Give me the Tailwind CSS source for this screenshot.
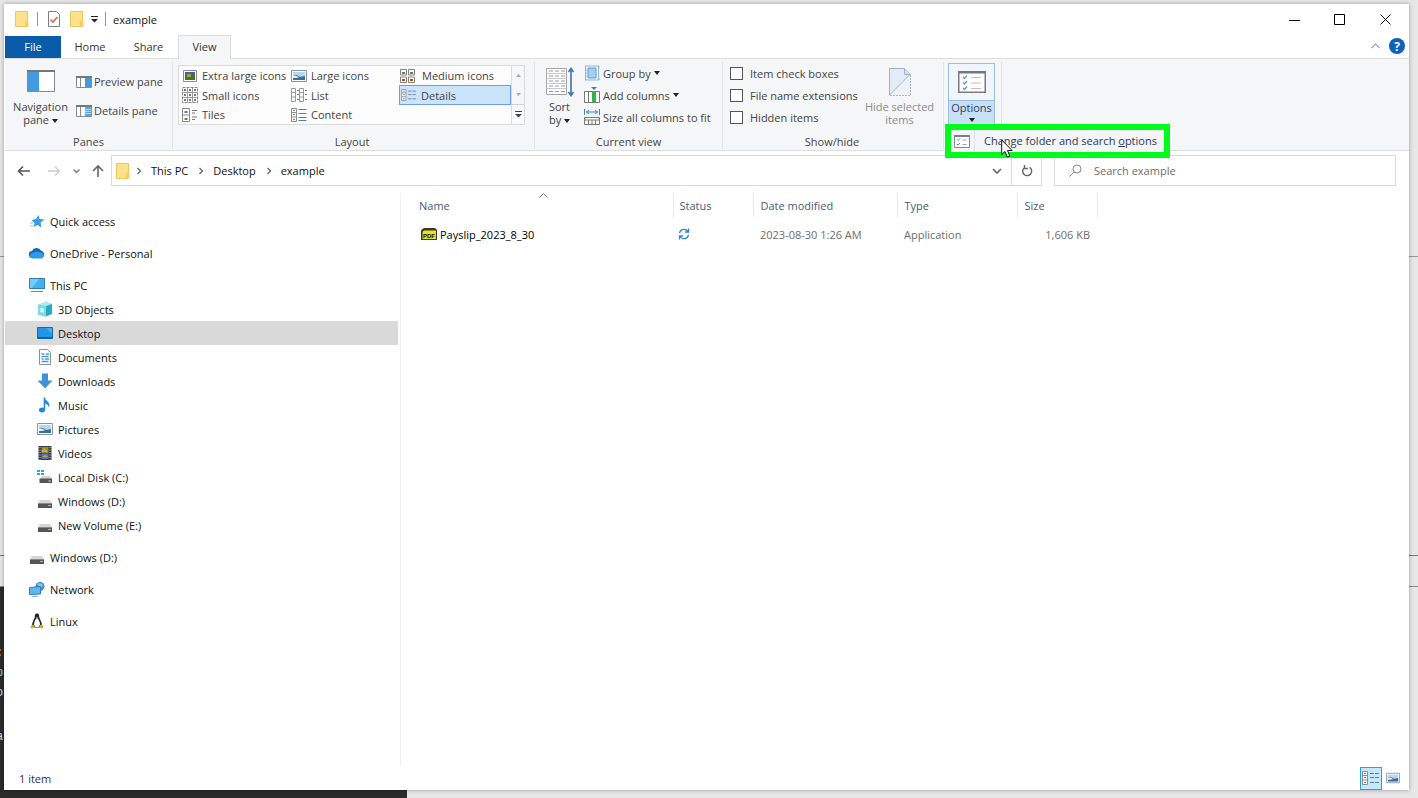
<!DOCTYPE html>
<html lang="en">
<head>
<meta charset="utf-8">
<title>example</title>
<script src="https://cdn.jsdelivr.net/npm/@tailwindcss/browser@4"></script>
</head>
<body class="font-['Open_Sans','Noto_Sans',sans-serif] text-[11px] leading-[13px] text-[#111]">
<svg class="hidden" aria-hidden="true">
  <symbol id="folder" viewBox="0 0 14 16"><path d="M.5.5h12v15H.5z" fill="#fde18b" stroke="#ecc75c"/><path d="M10 9.500h3.500v6H10z" fill="#f5cf62"/></symbol>
  <symbol id="caret" viewBox="0 0 6 4"><path d="M0 0h6L3 4z" fill="#222"/></symbol>
  <symbol id="chev" viewBox="0 0 6 8"><path d="M1.500 1 4.500 4l-3 3" fill="none" stroke="#666" stroke-width="1.300"/></symbol>
  <symbol id="picture" viewBox="0 0 16 14"><path d="M.5 1.500h15v11H.5z" fill="#fff" stroke="#8795a3"/><path d="M2 3h12v8H2z" fill="#b5d8f2"/><path d="M2 7l4-1 3 2 5-1v4H2z" fill="#3d6f94"/><path d="M2 7l4 0 2 1.500-6 .5z" fill="#fff"/></symbol>
  <symbol id="details" viewBox="0 0 18 14"><path d="M.5.5h5v13h-5zM.5 4.500h5M.5 9h5" fill="#fff" stroke="#8c8c8c"/><path d="M2 2.500h2M2 6.500h2M2 11.500h2" stroke="#a4673f"/><path d="M8 2.500h4M13 2.500h4M8 6.500h4M13 6.500h4M8 11.500h4M13 11.500h4" stroke="#5b7fa8"/></symbol>
  <symbol id="drive" viewBox="0 0 16 16"><path d="M3 7h10l2 4H1z" fill="#d5d5d5"/><path d="M1 10.500h14V15H1z" fill="#555"/><path d="M1 10.500h14" stroke="#8a8a8a"/><path d="M11.500 12.500h2" stroke="#d8f5d8"/></symbol>
  <symbol id="checklist" viewBox="0 0 28 22"><path d="M.75.75h26.500v20.500H.75z" fill="#fff" stroke="#7b7b7b" stroke-width="1.500"/><path d="M1 1.500h26" stroke="#777" stroke-width="2"/><path d="M5 6l1.500 1.500L9 4.500M5 11.500 6.500 13 9 10M5 17l1.500 1.500L9 15.500" fill="none" stroke="#5f97d0" stroke-width="1.300"/><path d="M13 6.500h10M13 12h10M13 17.500h10" stroke="#d8b7a4"/></symbol>
  <symbol id="checklist-small" viewBox="0 0 16 13"><path d="M.5.5h15v12H.5z" fill="#fff" stroke="#808890"/><path d="M0 1h16" stroke="#7a7f88" stroke-width="2"/><path d="M3 4.500l1 1 2-2M3 9l1 1 2-2" fill="none" stroke="#6a6fd0"/><path d="M8.500 5h4M8.500 9.500h4" stroke="#a79ac0"/></symbol>
</svg>

<div class="relative h-screen overflow-hidden bg-[#e7e7e7] pt-1 pr-[9px] pb-2 pl-1">
  <div class="absolute inset-x-0 top-64 h-px bg-[#999]"></div>
  <div class="absolute inset-x-0 top-[555px] h-px bg-[#777]"></div>
  <div class="absolute inset-x-0 top-[586px] h-px bg-[#888]"></div>
  <div class="absolute top-[587px] bottom-0 left-0 w-[407px] overflow-hidden bg-[#2b2b2b] font-['Liberation_Mono',monospace] text-[12px] text-[#ddd]" aria-hidden="true">
    <div class="absolute top-[60px] -left-1">:</div><div class="absolute top-[80px] -left-1 text-[#7fe0b0]">p</div><div class="absolute top-[100px] -left-1">o</div><div class="absolute top-[144px] -left-1">a</div>
  </div>

  <main class="relative flex h-full flex-col bg-white pl-px shadow-[0_0_4px_rgba(0,0,0,0.35)]">
    <header class="flex h-8 shrink-0 items-center pb-0.5 pl-2.5">
      <svg class="h-4 w-3.5"><use href="#folder"/></svg>
      <span class="mr-2.5 ml-2 h-3.5 w-px bg-[#999]"></span>
      <button aria-label="Properties"><svg class="h-4 w-3" viewBox="0 0 12 16"><path d="M.5.5h8l3 3v12H.5z" fill="#fff" stroke="#7d7d7d"/><path d="M2.500 8.500 5 11l4.500-5" fill="none" stroke="#d9694b" stroke-width="1.700"/></svg></button>
      <button class="ml-2.5" aria-label="New folder"><svg class="h-4 w-3.5"><use href="#folder"/></svg></button>
      <button class="ml-[7px]" aria-label="Customize toolbar"><svg class="h-2 w-[7px]" viewBox="0 0 7 8"><path d="M0 1.500h7" stroke="#222"/><path d="M0 4h7L3.500 7.500z" fill="#222"/></svg></button>
      <span class="mx-[7px] h-3.5 w-px bg-[#999]"></span>
      <h1>example</h1>
      <div class="ml-auto flex h-full">
        <button class="flex w-[46px] items-center justify-center" aria-label="Minimize"><svg class="size-[11px]" viewBox="0 0 11 11"><path d="M0 6.500h11" stroke="#000"/></svg></button>
        <button class="flex w-[45px] items-center justify-center" aria-label="Maximize"><svg class="size-[11px]" viewBox="0 0 11 11"><path d="M.5.5h10v10H.5z" fill="none" stroke="#000"/></svg></button>
        <button class="flex w-[47px] items-center justify-center" aria-label="Close"><svg class="size-[11px]" viewBox="0 0 11 11"><path d="M.5.5l10 10M10.500.5l-10 10" stroke="#000"/></svg></button>
      </div>
    </header>

    <nav class="flex h-[23px] shrink-0 items-stretch border-b border-[#dcdcdc] text-[#333]" aria-label="Ribbon tabs">
      <button class="w-14 bg-[#0a5ca8] pb-0.5 text-white">File</button>
      <button class="w-[58px] pb-0.5">Home</button>
      <button class="w-[59px] pb-0.5">Share</button>
      <button class="-mt-px -mb-px w-[53px] border border-b-0 border-[#dcdcdc] bg-[#f5f6f7] pb-0.5">View</button>
      <div class="ml-auto flex items-center gap-2 pr-1 pb-0.5">
        <button aria-label="Collapse ribbon"><svg class="h-2 w-[11px]" viewBox="0 0 11 8"><path d="M1.500 6 5.500 2l4 4" fill="none" stroke="#a5a9b0" stroke-width="1.300"/></svg></button>
        <button class="size-4 rounded-full bg-[#0c62b8] text-[12px] font-bold text-white" aria-label="Help">?</button>
      </div>
    </nav>

    <section class="flex h-[92px] shrink-0 border-b border-[#dedede] bg-[#f5f6f7] pt-[3px] pb-px text-[#444]" aria-label="View ribbon">
      <div class="flex w-[168px] flex-col border-r border-[#e2e3e4]">
        <div class="flex h-[70px]">
          <button class="flex w-[71px] flex-col items-center pt-2"><svg class="h-[22px] w-7" viewBox="0 0 28 22"><path d="M.5.5h27v21H.5z" fill="#fff" stroke="#8a8a8a"/><path d="M1 1h11v20H1z" fill="#439bdd"/><path d="M0 1h28" stroke="#777" stroke-width="2"/></svg>
            <span class="mt-2">Navigation<br>pane <svg class="inline h-1 w-1.5 align-middle"><use href="#caret"/></svg></span></button>
          <div class="flex flex-col items-start gap-3 pt-[11px]">
            <button class="flex h-[17px] items-center gap-0.5"><svg class="h-3 w-4" viewBox="0 0 16 12"><path d="M.5.5h15v11H.5zM4.500 1v10" fill="#fff" stroke="#8a8a8a"/><path d="M9 1h6.500v10H9z" fill="#439bdd"/><path d="M0 1h16" stroke="#777" stroke-width="2"/></svg>Preview pane</button>
            <button class="flex h-[17px] items-center gap-0.5"><svg class="h-3 w-4" viewBox="0 0 16 12"><path d="M.5.5h15v11H.5zM4.500 1v10" fill="#fff" stroke="#8a8a8a"/><path d="M9 1h6.500v10H9z" fill="#58a8e4"/><path d="M9 4.500h6M9 6.500h6M9 8.500h6" stroke="#b7dcf5"/><path d="M0 1h16" stroke="#777" stroke-width="2"/></svg>Details pane</button>
          </div>
        </div>
        <h2 class="mt-[3px] text-center">Panes</h2>
      </div>

      <div class="flex w-[362px] flex-col border-r border-[#e2e3e4] pr-2 pl-[5px]">
        <div class="h-[70px] pt-[3px]">
          <div class="flex h-[60px] w-[347px] border border-[#dadbdc] bg-[#fcfcfd]">
            <div class="grid h-[58px] w-[332px] shrink-0 grid-cols-[112px_109px_111px] grid-rows-[19px_20px_19px] whitespace-nowrap">
              <button class="flex items-center gap-1 pl-[3px]"><svg class="h-3.5 w-4" viewBox="0 0 16 14"><path d="M1.500 1.500h13v11h-13z" fill="#fff" stroke="#888ba8"/><path d="M3 3h10v8H3z" fill="#4b58a6"/><path d="M3 8l3-3 3 2 4-2v6H3z" fill="#48731f"/><path d="M5 5h4v3H5z" fill="#9fa83a"/></svg>Extra large icons</button>
              <button class="flex items-center gap-1"><svg class="h-3.5 w-4"><use href="#picture"/></svg>Large icons</button>
              <button class="flex items-center gap-1.5"><svg class="h-3.5 w-4" viewBox="0 0 16 14"><path d="M.5.5h6v5.500h-6zM8.500.5h6v5.500h-6zM.5 8h6v5.500h-6zM8.500 8h6v5.500h-6z" fill="#fff" stroke="#8a8078"/><path d="M2 4h3M10 4h3" stroke="#3b8f6c" stroke-width="2"/><path d="M2 11h3M10 11h3" stroke="#b05333" stroke-width="2"/></svg>Medium icons</button>
              <button class="flex items-center gap-1 pl-[3px]"><svg class="size-4" viewBox="0 0 16 16"><path d="M.5.5h15v15H.5z" fill="#fff" stroke="#888" stroke-dasharray="3 1"/><path d="M.5 5.500h15M.5 10.500h15M5.500.5v15M10.500.5v15" stroke="#999"/><path d="M2 3h2M7 3h2M12 3h2M2 8h2M7 8h2M12 8h2M2 13h2M7 13h2M12 13h2" stroke="#777" stroke-width="2"/></svg>Small icons</button>
              <button class="flex items-center gap-1"><svg class="h-3.5 w-4" viewBox="0 0 16 14"><path d="M.5.5h4v13h-4zM8.500.5h4v13h-4zM.5 4.500h4M.5 9h4M8.500 4.500h4M8.500 9h4" fill="#fff" stroke="#999"/><path d="M6 2.500h2M6 6.500h2M6 11.500h2M14 2.500h2M14 6.500h2M14 11.500h2" stroke="#777"/></svg>List</button>
              <button class="-ml-px flex items-center gap-1 border border-[#6aa0e0] bg-[#cce4fb] pl-px"><svg class="h-3 w-4"><use href="#details"/></svg>Details</button>
              <button class="flex items-center gap-1 pl-[3px]"><svg class="h-3.5 w-4" viewBox="0 0 16 14"><path d="M.5.5h7v13h-7zM.5 7h7" fill="#fff" stroke="#8a8a8a"/><path d="M2.500 4h3" stroke="#4a7fb0" stroke-width="2"/><path d="M2.500 11h3" stroke="#4d9254" stroke-width="2"/><path d="M10 2.500h5M10 5h3M10 9h5M10 11.500h3" stroke="#777"/></svg>Tiles</button>
              <button class="flex items-center gap-1"><svg class="h-3.5 w-4" viewBox="0 0 16 14"><path d="M.5.5h5v13h-5zM.5 4.500h5M.5 9h5" fill="#fff" stroke="#8c8c8c"/><path d="M2 2.500h2M2 6.500h2M2 11.500h2" stroke="#5a9b6b"/><path d="M7.500 1.500h8M7.500 5.500h8M7.500 9.500h8M7.500 12.500h8" stroke="#4c7fc4"/></svg>Content</button>
            </div>
            <div class="flex flex-1 flex-col border-l border-[#dadbdc] bg-[#f5f6f7]">
              <button class="flex flex-1 items-center justify-center" aria-label="Scroll up"><svg class="h-[3px] w-[5px]" viewBox="0 0 5 3"><path d="M0 3h5L2.500 0z" fill="#aaa"/></svg></button>
              <button class="flex flex-1 items-center justify-center" aria-label="Scroll down"><svg class="h-[3px] w-[5px]" viewBox="0 0 5 3"><path d="M0 0h5L2.500 3z" fill="#aaa"/></svg></button>
              <button class="flex flex-1 items-center justify-center border-t border-[#c5d5e8] bg-[#f8fafd]" aria-label="More layouts"><svg class="h-[7px] w-[7px]" viewBox="0 0 7 7"><path d="M0 .5h7" stroke="#444"/><path d="M0 3h7L3.500 6.500z" fill="#444"/></svg></button>
            </div>
          </div>
        </div>
        <h2 class="mt-[3px] text-center">Layout</h2>
      </div>

      <div class="flex w-[188px] flex-col border-r border-[#e2e3e4]">
        <div class="flex h-[70px]">
          <button class="flex w-[49px] flex-col items-center pt-[5px]"><svg class="h-[30px] w-7" viewBox="0 0 28 30"><path d="M.5 1.500h20v26H.5z" fill="#fff" stroke="#a5a5a5"/><path d="M.5 6.500h20M.5 11.500h20M.5 16.500h20M.5 21.500h20" stroke="#c2c8ce"/><path d="M3 4h4M9 4h4M15 4h4M3 9h4M9 9h4M15 9h4M3 14h4M9 14h4M15 14h4M3 19h4M9 19h4M15 19h4M3 24.500h4M9 24.500h4M15 24.500h4" stroke="#999"/><path d="M25 3v24M22.500 5 25 1.500 27.500 5M22.500 25l2.500 3.500 2.500-3.500" fill="none" stroke="#4778b5" stroke-width="1.700"/></svg>
            <span class="mt-[3px]">Sort<br>by <svg class="inline h-1 w-1.5 align-middle"><use href="#caret"/></svg></span></button>
          <div class="flex flex-col whitespace-nowrap">
            <button class="flex h-[22px] items-center gap-[3px]"><svg class="size-4" viewBox="0 0 16 16"><path d="M1 1h14v2M1 5h2M1 8h2M1 11h2M1 15h14v-2" fill="none" stroke="#8db8df"/><path d="M1.500 1v14M14.500 1v14" stroke="#8db8df"/><path d="M4 3h8v10H4z" fill="#a6d0f2" stroke="#5c9dd0"/></svg>Group by <svg class="h-1 w-1.5"><use href="#caret"/></svg></button>
            <button class="flex h-[22px] items-center gap-[3px]"><svg class="size-4" viewBox="0 0 16 16"><path d="M.5 4.500h15v11H.5zM4.500 4.500v11" fill="#fff" stroke="#777"/><path d="M8 4h4v11.500H8z" fill="#35b14a"/><path d="M7 0h6l-3 3z" fill="#4778b5"/></svg>Add columns <svg class="h-1 w-1.5"><use href="#caret"/></svg></button>
            <button class="flex h-[22px] items-center gap-[3px]"><svg class="size-4" viewBox="0 0 16 16"><path d="M.5 0v6M15.500 0v6M2 3h12M5 1 2.500 3 5 5M11 1l2.500 2L11 5" fill="none" stroke="#3f7fc4"/><path d="M.5 8.500h15v7H.5zM.5 11h15M4.500 11v4.500M8 11v4.500M11.500 11v4.500" fill="#fff" stroke="#777"/></svg>Size all columns to fit</button>
          </div>
        </div>
        <h2 class="mt-[3px] text-center">Current view</h2>
      </div>

      <div class="flex w-[221px] flex-col border-r border-[#e2e3e4]">
        <div class="flex h-[70px] pl-[7px]">
          <div class="flex w-[134px] shrink-0 flex-col whitespace-nowrap">
            <label class="flex h-[22px] items-center gap-[7px]"><input type="checkbox" class="size-[13px] appearance-none border border-[#555] bg-white">Item check boxes</label>
            <label class="flex h-[22px] items-center gap-[7px]"><input type="checkbox" class="size-[13px] appearance-none border border-[#555] bg-white">File name extensions</label>
            <label class="flex h-[22px] items-center gap-[7px]"><input type="checkbox" class="size-[13px] appearance-none border border-[#555] bg-white">Hidden items</label>
          </div>
          <button class="flex w-[71px] flex-col items-center pt-[5px] whitespace-nowrap text-[#8b8b8b]"><svg class="h-[30px] w-[22px]" viewBox="0 0 22 30"><path d="M.5 1.500h15l6 6v21H.5z" fill="#edf2f9" stroke="#a9b6c6" stroke-dasharray="2 1"/><path d="M.5 28 21 7.500l-5.500-6H.5z" fill="#e2ebf6" stroke="#a4b4c8"/><path d="M15.500 1.500v6h6" fill="#cfe0f2" stroke="#a4b4c8"/></svg>
            <span class="mt-[3px]">Hide selected<br>items</span></button>
        </div>
        <h2 class="mt-[3px] pr-0.5 text-center">Show/hide</h2>
      </div>

      <div class="relative w-[58px] border-r border-[#e2e3e4] pl-1">
        <button class="mt-px flex h-[62px] w-[47px] flex-col items-center border border-[#9cbfe6] bg-[#f1f6fc] text-[#2d3f5c]" aria-haspopup="menu" aria-expanded="true"><svg class="mt-[7px] h-[22px] w-7 shrink-0"><use href="#checklist"/></svg>
          <span class="mt-[7px] flex w-full flex-1 flex-col items-center gap-1 border-t border-[#9cbfe6] bg-[#c7dff7]">Options <svg class="h-1 w-1.5 shrink-0"><use href="#caret"/></svg></span></button>
        <div class="absolute top-[62px] left-px z-10 flex h-[34px] w-[225px] items-center border-[6px] border-[#00fb1c] bg-[#f3f5f9]" role="menu">
          <button class="flex h-full w-full items-center whitespace-nowrap text-[#2d3a50]" role="menuitem"><span class="flex h-full w-6 items-center border-r border-[#dcdfe4] pl-[3px]"><svg class="h-[13px] w-4"><use href="#checklist-small"/></svg></span><span class="pb-0.5 pl-[9px]">Change folder and search <u>o</u>ptions</span></button>
          <svg class="absolute top-[9px] left-[50px] h-[19px] w-3" viewBox="0 0 12 19"><path d="M.7 1v14.500l3.300-3 2.300 5.500 2.500-1-2.300-5.500h4.600z" fill="#fff" stroke="#111"/></svg>
        </div>
      </div>
    </section>

    <div class="flex h-9 shrink-0 items-end pr-[13px] pb-px">
      <div class="flex h-[31px] items-center pl-3">
        <button aria-label="Back"><svg class="h-3 w-3.5" viewBox="0 0 14 12"><path d="M13 6H2M6 1.500 1.500 6 6 10.500" fill="none" stroke="#555" stroke-width="1.600"/></svg></button>
        <button class="ml-4" aria-label="Forward"><svg class="h-3 w-3.5" viewBox="0 0 14 12"><path d="M1 6h11M8 1.500 12.500 6 8 10.500" fill="none" stroke="#ccc" stroke-width="1.300"/></svg></button>
        <button class="ml-3" aria-label="Recent locations"><svg class="h-1.5 w-[7px]" viewBox="0 0 7 6"><path d="M.5 1.500l3 3 3-3" fill="none" stroke="#777" stroke-width="1.300"/></svg></button>
        <button class="ml-3" aria-label="Up"><svg class="h-3.5 w-3" viewBox="0 0 12 14"><path d="M6 13V2M1 7l5-5 5 5" fill="none" stroke="#666" stroke-width="1.600"/></svg></button>
      </div>
      <nav class="ml-[7px] flex h-[31px] flex-1 items-center border border-[#d9d9d9] pl-1" aria-label="Address">
        <svg class="h-4 w-3.5"><use href="#folder"/></svg>
        <svg class="ml-1.5 h-2 w-1.5"><use href="#chev"/></svg>
        <a href="#" class="ml-[9px]">This PC</a>
        <svg class="ml-2.5 h-2 w-1.5"><use href="#chev"/></svg>
        <a href="#" class="ml-[9px]">Desktop</a>
        <svg class="ml-2.5 h-2 w-1.5"><use href="#chev"/></svg>
        <a href="#" class="ml-[9px]">example</a>
        <div class="ml-auto flex h-full">
          <button class="flex w-[29px] items-center justify-center" aria-label="Previous locations"><svg class="h-2 w-2.5" viewBox="0 0 10 8"><path d="M1 2l4 4 4-4" fill="none" stroke="#666" stroke-width="1.600"/></svg></button>
          <button class="flex w-[30px] items-center justify-center border-l border-[#d9d9d9]" aria-label="Refresh"><svg class="size-3" viewBox="0 0 12 12"><path d="M3.500 2.500A4.500 4.500 0 1 0 8.500 2.300M3.500 0v3.500H7" fill="none" stroke="#666" stroke-width="1.400"/></svg></button>
        </div>
      </nav>
      <label class="ml-3 flex h-[31px] w-[342px] items-center border border-[#d9d9d9] pl-3.5"><svg class="size-[13px]" viewBox="0 0 13 13"><circle cx="8" cy="5" r="4" fill="none" stroke="#888"/><path d="M5 8 .5 12.500" stroke="#888"/></svg><input type="search" placeholder="Search example" aria-label="Search example" class="ml-3 min-w-0 flex-1 outline-none placeholder:text-[#6d6d6d]"></label>
    </div>

    <div class="flex min-h-0 flex-1 pt-1.5">
      <nav class="flex w-[396px] shrink-0 flex-col border-r border-[#f1f1f1] pt-4" aria-label="Folders">
        <a href="#" class="flex h-6 items-center gap-[5px] pl-6"><svg class="size-4" viewBox="0 0 16 16"><path d="M9.500 2l1 4 5 .5-4 3 1 5-4-2.500-4 2 1-4-3-3 4.500-1z" fill="#3b9be6"/><path d="M1 10h3M1 13h3" stroke="#8bc5ee"/></svg>Quick access</a>
        <a href="#" class="mt-2 flex h-6 items-center gap-[5px] pl-6"><svg class="size-4" viewBox="0 0 16 16"><path d="M3.500 13a3.500 3.500 0 0 1-.5-7 5 5 0 0 1 9-.5 4 4 0 0 1 1 7.500z" fill="#1267b8"/><path d="M3 13.500a3 3 0 0 1-1-5l5-2 5 1a3.200 3.200 0 0 1 1 6z" fill="#2e9be8"/></svg>OneDrive - Personal</a>
        <a href="#" class="mt-2 flex h-6 items-center gap-[5px] pl-6"><svg class="size-4" viewBox="0 0 16 16"><path d="M.5 1.500h15v10H.5z" fill="#44b0f0" stroke="#2d7fb4"/><path d="M1 2h9L3 11H1z" fill="#7accf7"/><path d="M2 14.500h12" stroke="#7b8792"/></svg>This PC</a>
        <a href="#" class="flex h-6 items-center gap-[5px] pl-8"><svg class="size-4" viewBox="0 0 16 16"><path d="M1 4l8-3 6 2v10l-6 2.500-8-2z" fill="#29a9c4"/><path d="M1 4l8 1v10.500l-8-2z" fill="#7fdbe2"/><path d="M1 4l8-3 6 2-6 2z" fill="#b0eff0"/><path d="M3.500 7l3 .5v4l-3-.5z" fill="#e7fbfa"/></svg>3D Objects</a>
        <a href="#" aria-current="page" class="mr-0.5 flex h-6 items-center gap-[5px] bg-[#d9d9d9] pl-8"><svg class="size-4" viewBox="0 0 16 16"><path d="M.5 2.500h15v11H.5z" fill="#1f96ea" stroke="#126bb0"/><path d="M9 3h6v6z" fill="#41aff5"/><path d="M1 12.500h14" stroke="#0c5a99"/></svg>Desktop</a>
        <a href="#" class="flex h-6 items-center gap-[5px] pl-8"><svg class="size-4" viewBox="0 0 16 16"><path d="M2.500.5h8l3 3v12h-11z" fill="#fff" stroke="#8092a3"/><path d="M4.500 5h3M9 5h3M4.500 7.500h7M4.500 10h2M8 10h4M4.500 12.500h7" stroke="#4b9bd0" stroke-width="1.300"/></svg>Documents</a>
        <a href="#" class="flex h-6 items-center gap-[5px] pl-8"><svg class="size-4" viewBox="0 0 16 16"><path d="M5 .5h6v7h4.500L8 15.500.5 7.500H5z" fill="#3e93d8"/></svg>Downloads</a>
        <a href="#" class="flex h-6 items-center gap-[5px] pl-8"><svg class="size-4" viewBox="0 0 16 16"><path d="M7.500.5v12" stroke="#1c88d6" stroke-width="1.600"/><ellipse cx="5" cy="13" rx="3" ry="2.500" fill="#1c88d6"/><path d="M7 .5c1 3 7 4 5 10-.5-2.500-3-4-5-4.500z" fill="#1c88d6"/></svg>Music</a>
        <a href="#" class="flex h-6 items-center gap-[5px] pl-8"><svg class="h-3.5 w-4"><use href="#picture"/></svg>Pictures</a>
        <a href="#" class="flex h-6 items-center gap-[5px] pl-8"><svg class="size-4" viewBox="0 0 16 16"><path d="M1.500 1h13v14h-13z" fill="#3b3b45"/><path d="M3 2v13M13 2v13" stroke="#d5d5dd" stroke-dasharray="1 1.500"/><path d="M4.500 2h7v5.500h-7z" fill="#7a9b2e"/><path d="M4.500 8.500h7V14h-7z" fill="#4c78c8"/><path d="M4.500 6l3-3 4 4.500h-7zM5 12l3-2 3.500 2z" fill="#d8a53d"/></svg>Videos</a>
        <a href="#" class="flex h-6 items-center gap-[5px] pl-8"><svg class="size-4" viewBox="0 0 16 16"><path d="M0 1h3v2H0zM4 1h3v2H4zM0 4h3v2H0zM4 4h3v2H4z" fill="#29abe2"/><path d="M5 7h8l2 3H3z" fill="#d5d5d5"/><path d="M2.500 9.500H15V14H2.500z" fill="#555"/><path d="M11.500 12h2" stroke="#d8f5d8"/></svg>Local Disk (C:)</a>
        <a href="#" class="flex h-6 items-center gap-[5px] pl-8"><svg class="size-4"><use href="#drive"/></svg>Windows (D:)</a>
        <a href="#" class="flex h-6 items-center gap-[5px] pl-8"><svg class="size-4"><use href="#drive"/></svg>New Volume (E:)</a>
        <a href="#" class="mt-2 flex h-6 items-center gap-[5px] pl-6"><svg class="size-4"><use href="#drive"/></svg>Windows (D:)</a>
        <a href="#" class="mt-2 flex h-6 items-center gap-[5px] pl-6"><svg class="size-4" viewBox="0 0 16 16"><circle cx="11" cy="5.500" r="4.500" fill="#3f8fc9"/><path d="M8 3l3-1 3 2-2 3z" fill="#8bc7ec"/><path d="M.5 6.500l11-1v7.500l-11 .5z" fill="#5cb8f0" stroke="#2d7fb4"/><path d="M3 15.500h6" stroke="#7fb2d6"/></svg>Network</a>
        <a href="#" class="mt-2 flex h-6 items-center gap-[5px] pl-6"><svg class="size-4" viewBox="0 0 16 16"><path d="M8 .5c-2 0-2.300 1.500-2.200 3.500C5.500 6 3.300 8.500 3 12l2 2.500h6l2-2.500c-.3-3.500-2.500-6-2.800-8C10.300 2 10 .5 8 .5z" fill="#222"/><path d="M8 5c-1.500 1-3 4-3 6.500L6.500 14h3l1.500-2.500C11 9 9.500 6 8 5z" fill="#fff"/><path d="M6.500 4.200h3L8 5.500zM2 12.500l2.500-1L6.500 15l-5 .3zM14 12.500l-2.500-1L9.500 15l5 .3z" fill="#d8a928"/></svg>Linux</a>
      </nav>

      <div class="min-w-0 flex-1">
        <table class="table-fixed border-collapse text-left">
          <colgroup><col class="w-[272px]"><col class="w-20"><col class="w-36"><col class="w-[120px]"><col class="w-20"></colgroup>
          <thead class="text-[#4c5a75]">
            <tr class="h-6">
              <th class="relative border-r border-[#e8e8e8] pl-[18px] font-normal" aria-sort="ascending">Name<svg class="absolute top-0 left-[138px] h-[5px] w-[9px]" viewBox="0 0 9 5"><path d="M.5 4.500l4-4 4 4" fill="none" stroke="#777"/></svg></th>
              <th class="border-r border-[#e8e8e8] pl-1.5 font-normal">Status</th>
              <th class="border-r border-[#e8e8e8] pl-[7px] font-normal">Date modified</th>
              <th class="border-r border-[#e8e8e8] pl-[7px] font-normal">Type</th>
              <th class="border-r border-[#e8e8e8] pl-[7px] font-normal">Size</th>
            </tr>
          </thead>
          <tbody>
            <tr class="h-[34px] text-[#6d6d6d]">
              <td class="pl-5"><div class="flex items-center gap-[3px] text-black"><svg class="h-3 w-4" viewBox="0 0 16 12"><path d="M0 12V4c0-3 2-4 5-4h9l2 2v10z" fill="#3a3818"/><path d="M1.500 11V5c0-2 1-2.500 3-2.500H15V11z" fill="#e9e12b"/><text x="2" y="10" font-family="Liberation Sans" font-size="6" font-weight="bold" fill="#111">PDF</text></svg>Payslip_2023_8_30</div></td>
              <td class="pl-[5px]"><svg class="size-3" viewBox="0 0 12 12" role="img" aria-label="Syncing"><path d="M1.500 5A4.700 4.700 0 0 1 10 3.500M10.500 7A4.700 4.700 0 0 1 2 8.500M10.500 .5v3.500H7M1.500 11.500V8H5" fill="none" stroke="#2b86d0" stroke-width="1.300"/></svg></td>
              <td class="pl-[7px]">2023-08-30 1:26 AM</td>
              <td class="pl-[7px]">Application</td>
              <td class="pr-[7px] text-right">1,606 KB</td>
            </tr>
          </tbody>
        </table>
      </div>
    </div>

    <footer class="flex h-6 shrink-0 items-center pl-3.5 text-[#2b3350]">
      <span>1 item</span>
      <div class="ml-auto flex items-center gap-1 pr-[9px]">
        <button class="flex h-[23px] w-[22px] items-center justify-center border border-[#2f9fd8] bg-[#c6e8fb]" aria-label="Details view"><svg class="h-3.5 w-[18px]"><use href="#details"/></svg></button>
        <button aria-label="Large icons view"><svg class="h-3 w-3.5"><use href="#picture"/></svg></button>
      </div>
    </footer>
  </main>
</div>
</body>
</html>
